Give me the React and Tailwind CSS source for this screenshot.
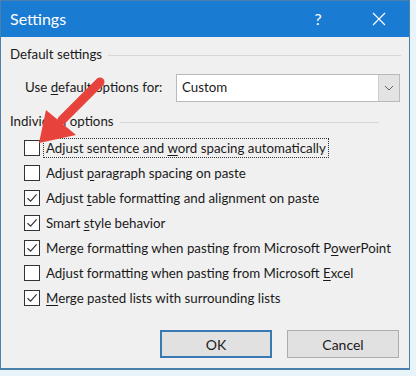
import React from "react";

const font = { fontFamily: 'Lato, "Noto Sans", sans-serif' };

function U({ children }) {
  return <span className="underline underline-offset-2 decoration-1">{children}</span>;
}

function Check({ checked }) {
  return (
    <div className="w-[16px] h-[16px] border border-[#333] bg-white flex items-center justify-center shrink-0">
      {checked && (
        <svg width="12" height="12" viewBox="0 0 12 12">
          <path d="M1.5 6.2 L4.6 9.2 L10.6 2.4" fill="none" stroke="#333" strokeWidth="1.2" />
        </svg>
      )}
    </div>
  );
}

const rows = [
  { checked: false, label: <>Adjust sentence and <U>w</U>ord spacing automatically</>, focus: true },
  { checked: false, label: <>Adjust <U>p</U>aragraph spacing on paste</> },
  { checked: true, label: <>Adjust <U>t</U>able formatting and alignment on paste</> },
  { checked: true, label: <>Smart <U>s</U>tyle behavior</> },
  { checked: true, label: <>Merge formatting when pasting from Microsoft P<U>o</U>werPoint</> },
  { checked: false, label: <>Adjust formatting when pasting from Microsoft <U>E</U>xcel</> },
  { checked: true, label: <><U>M</U>erge pasted lists with surrounding lists</> },
];

export default function App() {
  return (
    <div className="w-[416px] h-[376px] bg-[#e8f3fa] relative overflow-hidden whitespace-nowrap" style={font}>
      <div className="w-[410px] h-[370px] border border-[#4a80ab] border-b-2 flex flex-col">
        <div className="h-[36px] bg-[#1a7bd3] flex items-center text-white shrink-0">
          <div className="pl-[9px] text-[16px] flex-1">Settings</div>
          <div className="text-[16px] w-[20px] mr-[44px] text-center">?</div>
          <svg width="14" height="14" viewBox="0 0 14 14" className="mr-[23px]">
            <path d="M1 1 L13 13 M13 1 L1 13" stroke="white" strokeWidth="1.2" />
          </svg>
        </div>
        <div className="flex-1 bg-[#f0f0f0] text-[13.3px] text-[#1a1a1a] flex flex-col">
          <div className="flex items-center mt-[8px] pl-[9px] pr-[8px] h-[20px]">
            <span>Default settings</span>
            <div className="flex-1 h-px bg-[#d7d7d7] ml-[6px]" />
          </div>
          <div className="flex items-center mt-[9px] pl-[24px]">
            <span className="w-[151px] shrink-0">Use <U>d</U>efault options for:</span>
            <div className="w-[224px] h-[28px] border border-[#b9b9b9] bg-white flex">
              <div className="flex-1 pl-[5px] flex items-center">Custom</div>
              <div className="w-[21px] bg-[#e3e3e3] border-l border-[#cfcfcf] flex items-center justify-center">
                <svg width="10" height="6" viewBox="0 0 10 6">
                  <path d="M1 1 L5 5 L9 1" fill="none" stroke="#606060" strokeWidth="1" />
                </svg>
              </div>
            </div>
          </div>
          <div className="flex items-center mt-[10px] pl-[9px] pr-[30px] h-[20px]">
            <span>Individual options</span>
            <div className="flex-1 h-px bg-[#d7d7d7] ml-[6px]" />
          </div>
          <div className="flex flex-col mt-[3px] pl-[23px]">
            {rows.map((r, i) => (
              <div key={i} className="h-[25px] flex items-center">
                <Check checked={r.checked} />
                <span
                  className={
                    "ml-[3px] px-[2px] leading-[18px] border border-dotted " +
                    (r.focus ? "border-[#333]" : "border-transparent")
                  }
                >
                  {r.label}
                </span>
              </div>
            ))}
          </div>
          <div className="flex justify-end gap-[15px] mt-[20px] pr-[10px] text-[14px]">
            <div className="w-[112px] h-[28px] border-2 border-[#3a79b4] bg-[#e1e1e1] flex items-center justify-center">
              OK
            </div>
            <div className="w-[112px] h-[28px] border border-[#adadad] bg-[#e1e1e1] flex items-center justify-center">
              Cancel
            </div>
          </div>
        </div>
      </div>
      <svg className="absolute left-0 top-0 pointer-events-none" width="416" height="376" viewBox="0 0 416 376">
        <line x1="100" y1="82" x2="62" y2="120" stroke="#e8423d" strokeWidth="9" strokeLinecap="round" />
        <polygon points="39,143 46,110 76,135" fill="#e8423d" />
      </svg>
    </div>
  );
}
